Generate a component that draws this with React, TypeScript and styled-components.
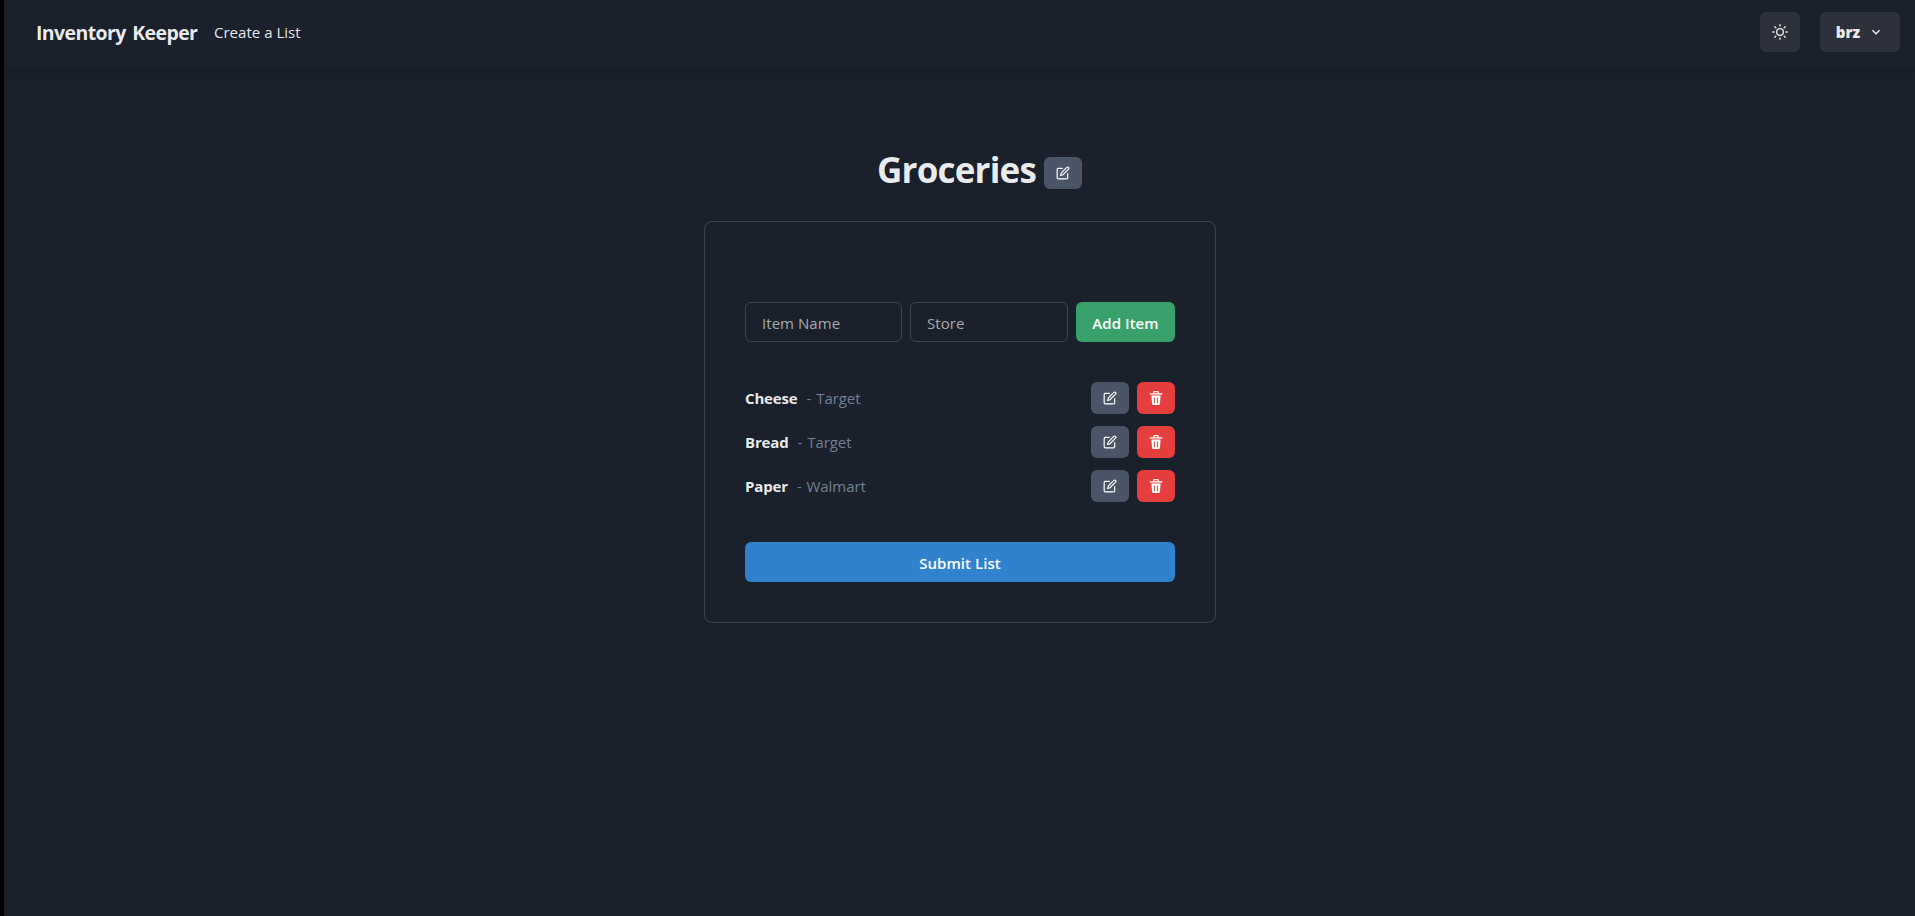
import React from "react";
import styled, { createGlobalStyle } from "styled-components";

const GlobalStyle = createGlobalStyle`
  *, *::before, *::after { box-sizing: border-box; }
  body {
    margin: 0;
    background: #1a202c;
    color: rgba(255, 255, 255, 0.92);
    font-family: "Open Sans", "Noto Sans", sans-serif;
    font-size: 15px;
    line-height: 24px;
  }
`;

const Page = styled.div`
  min-height: 100vh;
  border-left: 4px solid #000;
  display: flex;
  flex-direction: column;
`;

const Header = styled.header`
  height: 68px;
  padding: 12px 15px 16px 32px;
  display: flex;
  align-items: center;
  box-shadow: 0 4px 6px -1px rgba(0, 0, 0, 0.1), 0 2px 4px -1px rgba(0, 0, 0, 0.06);
`;

const Brand = styled.a`
  width: 178px;
  padding-top: 2px;
  font-size: 19.5px;
  font-weight: 700;
  letter-spacing: -0.6px;
  word-spacing: 2px;
  white-space: nowrap;
`;

const NavLink = styled.a`
  letter-spacing: 0.02px;
  white-space: nowrap;
`;

const HeaderActions = styled.div`
  margin-left: auto;
  display: flex;
  gap: 20px;
`;

const Button = styled.button<{ $bg: string; $color?: string; $size?: "sm" | "md"; $width?: number }>`
  flex: none;
  display: inline-flex;
  align-items: center;
  justify-content: center;
  height: ${(p) => (p.$size === "sm" ? 32 : 40)}px;
  width: ${(p) => (p.$width ? `${p.$width}px` : "100%")};
  padding: 0;
  border: 0;
  border-radius: 6px;
  background: ${(p) => p.$bg};
  color: ${(p) => p.$color ?? "#fff"};
  font: inherit;
  font-weight: 600;
  letter-spacing: 0.05px;
  white-space: nowrap;
`;

const ButtonLabel = styled.span`
  padding-top: 2px;
`;

const UserName = styled.span`
  margin-right: 8px;
  font-weight: 800;
`;

const Icon = styled.svg<{ $size: number }>`
  width: ${(p) => p.$size}px;
  height: ${(p) => p.$size}px;
  flex: none;
  display: block;
`;

const Main = styled.main`
  width: 512px;
  margin: 80px auto 0;
  position: relative;
  left: 0.5px;
`;

const TitleRow = styled.div`
  display: flex;
  align-items: flex-end;
  gap: 8px;
  height: 41px;
  padding-left: 173px;
`;

const Title = styled.h1`
  width: 159px;
  margin: 0;
  padding-top: 2px;
  font-size: 35px;
  font-weight: 700;
  line-height: 39px;
  letter-spacing: -0.8px;
  white-space: nowrap;
  align-self: flex-start;
`;

const Card = styled.section`
  margin-top: 32px;
  padding: 80px 40px 40px;
  border: 1px solid rgba(255, 255, 255, 0.16);
  border-radius: 8px;
  display: flex;
  flex-direction: column;
  gap: 40px;
`;

const AddForm = styled.div`
  display: grid;
  grid-template-columns: 157px 158px 99px;
  gap: 8px;
`;

const Input = styled.input`
  width: 100%;
  height: 40px;
  padding: 2px 16px 0;
  border: 1px solid rgba(255, 255, 255, 0.16);
  border-radius: 6px;
  background: transparent;
  color: inherit;
  font: inherit;
  letter-spacing: 0.05px;
  &::placeholder {
    color: #a9abaf;
    opacity: 1;
  }
`;

const List = styled.ul`
  margin: 0;
  padding: 0;
  list-style: none;
  display: flex;
  flex-direction: column;
  gap: 12px;
`;

const Row = styled.li`
  display: flex;
  align-items: center;
  gap: 8px;
`;

const ItemName = styled.span`
  margin-right: 1px;
  font-weight: 700;
  letter-spacing: -0.15px;
`;

const Store = styled.span`
  margin-right: auto;
  color: #718096;
  letter-spacing: -0.05px;
  word-spacing: 1px;
`;

const EditIcon = () => (
  <Icon $size={14} viewBox="0 0 24 24" fill="none" stroke="currentColor" strokeLinecap="round" strokeWidth="2">
    <path d="M11 4H4a2 2 0 0 0-2 2v14a2 2 0 0 0 2 2h14a2 2 0 0 0 2-2v-7" />
    <path d="M18.5 2.5a2.121 2.121 0 0 1 3 3L12 15l-4 1 1-4 9.5-9.5z" />
  </Icon>
);

const DeleteIcon = () => (
  <Icon $size={14} viewBox="0 0 24 24" fill="currentColor">
    <path d="M19.452 7.5H4.547a.5.5 0 00-.5.545l1.287 14.136A2 2 0 007.326 24h9.347a2 2 0 001.992-1.819L19.95 8.045a.5.5 0 00-.129-.382.5.5 0 00-.369-.163zm-9.2 13a.75.75 0 01-1.5 0v-9a.75.75 0 011.5 0zm5 0a.75.75 0 01-1.5 0v-9a.75.75 0 011.5 0zM22 4h-4.75a.25.25 0 01-.25-.25V2.5A2.5 2.5 0 0014.5 0h-5A2.5 2.5 0 007 2.5v1.25a.25.25 0 01-.25.25H2a1 1 0 000 2h20a1 1 0 000-2zM9 3.75V2.5a.5.5 0 01.5-.5h5a.5.5 0 01.5.5v1.25a.25.25 0 01-.25.25h-5.5A.25.25 0 019 3.75z" />
  </Icon>
);

const SunIcon = () => (
  <Icon $size={16} viewBox="0 0 24 24" fill="none" stroke="currentColor" strokeLinecap="round" strokeLinejoin="round" strokeWidth="2">
    <circle cx="12" cy="12" r="5" />
    <path d="M12 1v2M12 21v2M4.22 4.22l1.42 1.42M18.36 18.36l1.42 1.42M1 12h2M21 12h2M4.22 19.78l1.42-1.42M18.36 5.64l1.42-1.42" />
  </Icon>
);

const ChevronIcon = () => (
  <Icon $size={16} viewBox="0 0 24 24" fill="currentColor">
    <path d="M16.59 8.59L12 13.17 7.41 8.59 6 10l6 6 6-6z" />
  </Icon>
);

const soft = "#2c313c";
const light = "rgba(255, 255, 255, 0.92)";

const items = [
  { name: "Cheese", store: "Target" },
  { name: "Bread", store: "Target" },
  { name: "Paper", store: "Walmart" },
];

export default function App() {
  return (
    <Page>
      <GlobalStyle />
      <Header>
        <Brand>Inventory Keeper</Brand>
        <NavLink>Create a List</NavLink>
        <HeaderActions>
          <Button $bg={soft} $color={light} $width={40} aria-label="Toggle theme">
            <SunIcon />
          </Button>
          <Button $bg={soft} $color={light} $width={80}>
            <UserName>brz</UserName>
            <ChevronIcon />
          </Button>
        </HeaderActions>
      </Header>
      <Main>
        <TitleRow>
          <Title>Groceries</Title>
          <Button $bg="#4a5568" $size="sm" $width={38} aria-label="Edit title">
            <EditIcon />
          </Button>
        </TitleRow>
        <Card>
          <AddForm>
            <Input placeholder="Item Name" />
            <Input placeholder="Store" />
            <Button $bg="#38a169">
              <ButtonLabel>Add Item</ButtonLabel>
            </Button>
          </AddForm>
          <List>
            {items.map((item) => (
              <Row key={item.name}>
                <ItemName>{item.name}</ItemName>
                <Store>- {item.store}</Store>
                <Button $bg="#4a5568" $size="sm" $width={38} aria-label="Edit item">
                  <EditIcon />
                </Button>
                <Button $bg="#e53e3e" $size="sm" $width={38} aria-label="Delete item">
                  <DeleteIcon />
                </Button>
              </Row>
            ))}
          </List>
          <Button $bg="#3182ce">
            <ButtonLabel>Submit List</ButtonLabel>
          </Button>
        </Card>
      </Main>
    </Page>
  );
}
